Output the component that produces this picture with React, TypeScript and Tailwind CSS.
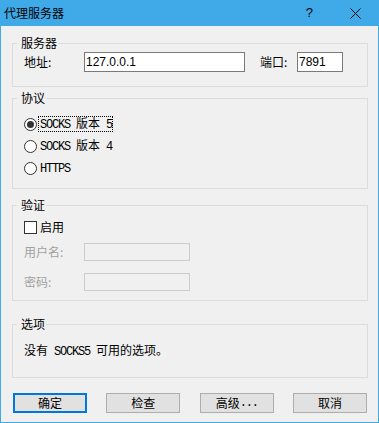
import React from 'react';

const Mono = ({ children }: { children: React.ReactNode }) => (
  <span className="font-['Liberation_Mono',monospace] text-[12px] tracking-[-1.2px] whitespace-pre">{children}</span>
);

const Group = ({
  title,
  className,
  children,
}: {
  title: string;
  className: string;
  children: React.ReactNode;
}) => (
  <fieldset className={`border border-[#dcdcdc] w-[356px] ${className}`}>
    <legend className="ml-[4px] pl-[4px] pr-[1px] text-[12px] leading-[14px] text-black">{title}</legend>
    {children}
  </fieldset>
);

const Radio = ({ checked, children }: { checked?: boolean; children: React.ReactNode }) => (
  <div className="flex items-center h-[22px]">
    <span className="w-[13px] h-[13px] rounded-full border border-[#333333] bg-white flex items-center justify-center">
      {checked && <span className="w-[7px] h-[7px] rounded-full bg-[#333333]" />}
    </span>
    <span className={`ml-[2px] leading-[12px] pl-[1px] ${checked ? 'outline outline-1 outline-dotted outline-black' : ''}`}>
      {children}
    </span>
  </div>
);

const Button = ({ children, primary }: { children: React.ReactNode; primary?: boolean }) => (
  <button
    className={`w-[74px] h-[20px] bg-[#e1e1e1] text-[12px] leading-[14px] flex items-center justify-center ${
      primary ? 'border-2 border-[#0078d7]' : 'border border-[#adadad]'
    }`}
  >
    {children}
  </button>
);

export default function App() {
  return (
    <div className="w-[379px] h-[423px] bg-[#f0f0f0] border-x border-b border-[#40a9e7] flex flex-col font-['Noto_Sans_CJK_SC',sans-serif] text-[12px] text-black">
      <div className="h-[26px] bg-[#40a9e7] flex items-center pl-[3px] shrink-0">
        <span className="leading-[14px]">代理服务器</span>
        <span className="ml-auto font-['Liberation_Sans',sans-serif] text-[13px] leading-[14px]">?</span>
        <svg className="ml-[37px] mr-[17px]" width="11" height="11" viewBox="0 0 11 11">
          <path d="M0.5 0.5 L10.5 10.5 M10.5 0.5 L0.5 10.5" stroke="#000" strokeWidth="1" />
        </svg>
      </div>

      <div className="pl-[11px] flex flex-col">
        <Group title="服务器" className="mt-[10px]">
          <div className="flex items-center pl-[11px] pt-[2px] pb-[14px]">
            <span className="w-[60px] leading-[14px]">地址:</span>
            <div className="w-[161px] h-[20px] bg-white border border-[#7a7a7a] flex items-center pl-[1px] font-['Liberation_Sans',sans-serif] text-[12px]">
              127.0.0.1
            </div>
            <span className="ml-[15px] w-[37px] leading-[14px]">端口:</span>
            <div className="w-[46px] h-[20px] bg-white border border-[#7a7a7a] flex items-center pl-[1px] font-['Liberation_Sans',sans-serif] text-[12px]">
              7891
            </div>
          </div>
        </Group>

        <Group title="协议" className="mt-[4px]">
          <div className="pl-[11px] pt-[8px] pb-[9px]">
            <Radio checked>
              <Mono>{'SOCKS '}</Mono>版本<Mono>{' 5'}</Mono>
            </Radio>
            <Radio>
              <Mono>{'SOCKS '}</Mono>版本<Mono>{' 4'}</Mono>
            </Radio>
            <Radio>
              <Mono>HTTPS</Mono>
            </Radio>
          </div>
        </Group>

        <Group title="验证" className="mt-[9px]">
          <div className="pl-[11px] pt-[4px] pb-[9px]">
            <div className="flex items-center h-[22px]">
              <span className="w-[13px] h-[13px] border border-[#333333] bg-white" />
              <span className="ml-[3px] leading-[14px]">启用</span>
            </div>
            <div className="flex items-center mt-[5px]">
              <span className="w-[60px] leading-[14px] text-[#a0a0a0]">用户名:</span>
              <div className="w-[106px] h-[18px] border border-[#cccccc] bg-[#f0f0f0]" />
            </div>
            <div className="flex items-center mt-[12px]">
              <span className="w-[60px] leading-[14px] text-[#a0a0a0]">密码:</span>
              <div className="w-[106px] h-[18px] border border-[#cccccc] bg-[#f0f0f0]" />
            </div>
          </div>
        </Group>

        <Group title="选项" className="mt-[16px]">
          <div className="pl-[11px] pt-[12px] pb-[18px] leading-[14px]">
            没有<Mono>{' SOCKS5 '}</Mono>可用的选项。
          </div>
        </Group>

        <div className="flex justify-between w-[354px] ml-[1px] mt-[15px]">
          <Button primary>确定</Button>
          <Button>检查</Button>
          <Button>
            高级<Mono>...</Mono>
          </Button>
          <Button>取消</Button>
        </div>
      </div>
    </div>
  );
}
